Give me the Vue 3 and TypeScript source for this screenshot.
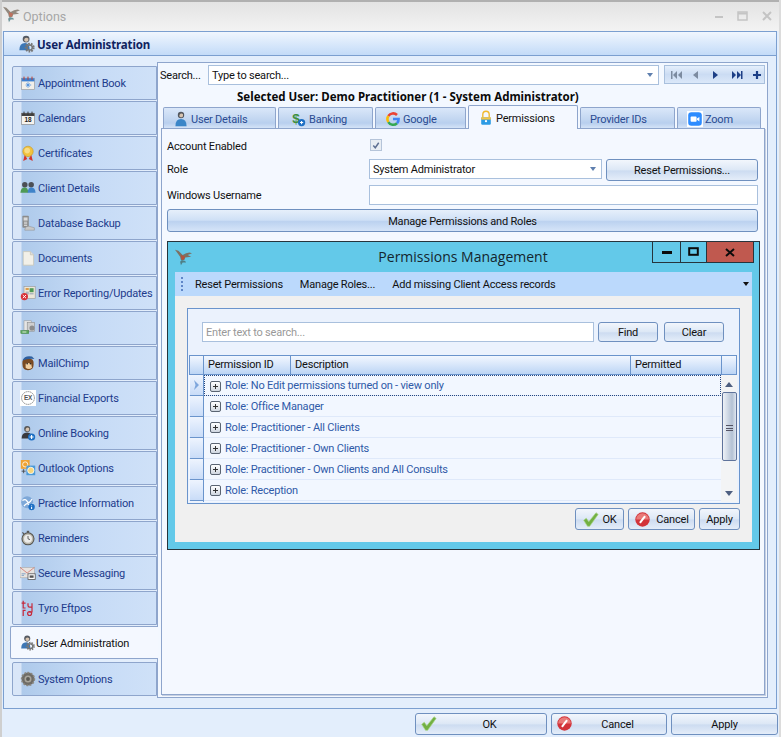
<script setup lang="ts">
const gear = (x: number, y: number, r: number, c = '#777') => `<circle cx="${x}" cy="${y}" r="${r}" fill="none" stroke="${c}" stroke-width="${r * 0.75}" stroke-dasharray="${r * 0.42} ${r * 0.28}"/><circle cx="${x}" cy="${y}" r="${r * 0.72}" fill="none" stroke="${c}" stroke-width="${r * 0.4}"/>`
const icons: Record<string, string> = {
  appt: `<rect x="2" y="4" width="16" height="14" fill="#f1efe9" stroke="#9a9a9a" stroke-width=".8"/><rect x="2" y="4" width="16" height="4" fill="#3d7fd0"/><path d="M5 2v4M10 2v4M15 2v4" stroke="#c0392b" stroke-width="1.2"/><path d="M10 9v7M7 12.5h7M8 10.5l4 4M12 10.5l-4 4" stroke="#4a8fe0" stroke-width="1"/>`,
  cal: `<rect x="2" y="4" width="16" height="14" fill="#f5f3ee" stroke="#888" stroke-width=".8"/><rect x="2" y="4" width="16" height="3.5" fill="#444"/><path d="M5 2v4M10 2v4M15 2v4" stroke="#333" stroke-width="1.2"/><text x="10" y="15.5" font-size="8" font-weight="700" text-anchor="middle" font-family="Liberation Sans" fill="#222">18</text>`,
  cert: `<path d="M6 12 L4 20 L9 17.5Z M14 12 L16 20 L11 17.5Z" fill="#d5342c"/><circle cx="10" cy="8" r="6.5" fill="#f1c23e" stroke="#c99a20" stroke-width=".8"/><circle cx="9" cy="7" r="3.5" fill="#f8dc86"/>`,
  client: `<circle cx="6" cy="6" r="3.4" fill="#4c4f55"/><path d="M0.5 16 Q1 9.5 6 9.5 Q10 9.5 10.5 16Z" fill="#4f9a55"/><circle cx="14" cy="6" r="3.4" fill="#4c4f55"/><path d="M9.5 16 Q10 9.5 14 9.5 Q19 9.5 19.5 16Z" fill="#3f83c9"/>`,
  db: `<rect x="3" y="1" width="8" height="15" rx="1" fill="#8c8c8c"/><rect x="4.5" y="3" width="5" height="4" fill="#dadada"/><path d="M5 9h4M5 11h4M5 13h4" stroke="#efefef"/><path d="M6 18 Q6 14 11 14 L18 16 L18 19 L6 19Z" fill="#c8c8c8" stroke="#8a8a8a" stroke-width=".6"/>`,
  doc: `<path d="M4 2 H13 L17 6 V19 H4Z" fill="#f2f0e8" stroke="#c8c5b8" stroke-width="1"/><path d="M13 2V6H17" fill="#ddd" stroke="#c8c5b8"/>`,
  err: `<rect x="5" y="2" width="14" height="15" fill="#ece7d8" stroke="#9a9a9a" stroke-width=".8"/><rect x="7" y="4" width="4" height="2" fill="#d98a2b"/><rect x="12" y="4" width="5" height="5" fill="#4f9a55"/><path d="M7 9h4M7 11h4M12 11h5" stroke="#7b8ea8"/><circle cx="5.5" cy="14.5" r="4.5" fill="#d8333a"/><path d="M3.5 12.5l4 4M7.5 12.5l-4 4" stroke="#fff" stroke-width="1.2"/>`,
  inv: `<rect x="5" y="1" width="9" height="12" fill="#e6e6e6" stroke="#999" stroke-width=".7"/><rect x="9" y="3" width="9" height="11" fill="#cfcfcf" stroke="#888" stroke-width=".7"/><circle cx="15" cy="10" r="3.2" fill="#8c8c8c"/><rect x="1" y="13" width="10" height="4" fill="#5aa55a" stroke="#3e7a3e" stroke-width=".5"/><path d="M3 15h5" stroke="#fff"/>`,
  chimp: `<path d="M3 11 Q2 4 10 4 Q18 4 17 12 Q17 19 10 19 Q3 19 3 11Z" fill="#7a4a22"/><path d="M7 11 Q10 9 14 11 L15 16 Q11 19 7 16Z" fill="#f0cfa2"/><path d="M3 7 Q6 0 15 2 L18 5 Q10 4 3 7Z" fill="#2e5f9f"/><circle cx="9" cy="11" r="1" fill="#222"/><circle cx="13" cy="11" r="1" fill="#222"/>`,
  ex: `<rect width="20" height="20" fill="#fff"/><circle cx="10" cy="10" r="8" fill="#fff" stroke="#777" stroke-width="1" stroke-dasharray="2 .6"/><text x="10" y="13" font-size="8" font-weight="700" text-anchor="middle" font-family="Liberation Sans" fill="#555">EX</text>`,
  online: `<circle cx="9" cy="5" r="3.8" fill="#555"/><path d="M7 5 Q9 2 11.5 4 L11.5 7 Q9 9 7 7Z" fill="#d8c4b0"/><path d="M2 17 Q2 9.5 9 9.5 Q15 9.5 15 17Z" fill="#3a3a3e"/><circle cx="14.5" cy="15" r="4.5" fill="#1d6fc4"/><path d="M14.5 12.5v5M12 15h5" stroke="#fff" stroke-width="1.4"/>`,
  outlook: `<rect x="1" y="0" width="11" height="11" fill="#f0a232"/><circle cx="6.5" cy="5.5" r="3.2" fill="none" stroke="#fff" stroke-width="1"/><rect x="8" y="7" width="11" height="12" fill="#4a9ad8"/><circle cx="13.5" cy="13" r="4" fill="#f7d67c" stroke="#fff"/><path d="M2 14h5M4.5 11.5v5" stroke="#444"/>`,
  practice: `<circle cx="9" cy="9" r="7.5" fill="#7ea8d8"/><path d="M3 7 Q7 4 9 8 T15 5M5 14 Q8 9 11 12 T16 11" stroke="#fff" stroke-width="1.6" fill="none"/><circle cx="14.5" cy="15" r="4" fill="#1d6fc4"/><path d="M14.5 13v1M14.5 15v2.5" stroke="#fff" stroke-width="1.3"/>`,
  remind: `<circle cx="10" cy="11" r="7.5" fill="#b8b5aa" stroke="#55534c" stroke-width="1.3"/><circle cx="10" cy="11" r="5" fill="#ececea"/><path d="M10 11V7.5M10 11l2.5 1" stroke="#444"/><rect x="8.5" y="1" width="3" height="2.5" fill="#555"/><path d="M3 3l2 2" stroke="#555" stroke-width="1.4"/>`,
  secure: `<rect x="0" y="3" width="18" height="13" fill="#e7e3df" stroke="#a5a5a5" stroke-width=".7"/><path d="M0 3l9 7 9-7" stroke="#d0736c" stroke-width="1" fill="none"/><path d="M2 11h5M2 13h3" stroke="#6d96c2"/><rect x="10" y="11" width="9" height="7" fill="#fff" stroke="#555"/><rect x="12" y="13" width="5" height="3" fill="#555"/>`,
  tyro: `<g fill="none" stroke="#c8283a" stroke-width="1.5"><path d="M4 1v9h3M2 4h5M10 4v3q0 2 2 2h3M15 4v11h-4"/><path d="M4 20v-7h3"/><circle cx="12" cy="17" r="2.5"/></g>`,
  user: `<circle cx="9" cy="4.5" r="3.8" fill="#555a62"/><path d="M7 4.5 Q9 2 11.5 4 L11.5 6.5 Q9 8.5 7 6.5Z" fill="#d8c4b0"/><path d="M1.5 17 Q1.5 9 8 9 Q13 9 13 17Z" fill="#3d77b5"/>${gear(13, 14, 4)}`,
  sys: `<circle cx="10" cy="10" r="8" fill="#6f6c66"/><circle cx="10" cy="10" r="8" fill="none" stroke="#8b8880" stroke-width="2" stroke-dasharray="2.4 1.6"/><circle cx="10" cy="10" r="4.4" fill="#a8a59c"/><circle cx="10" cy="10" r="2.4" fill="#5c5a54"/>`,
  udet: `<circle cx="10" cy="5" r="4" fill="#53575e"/><path d="M8 5 Q10 2 12.5 4 L12.5 7 Q10 9 8 7Z" fill="#d8c4b0"/><path d="M3 19 Q3 10 10 10 Q17 10 17 19Z" fill="#3a86c8"/>`,
  bank: `<text x="7.5" y="15" font-size="17" font-weight="700" text-anchor="middle" font-family="Liberation Sans" fill="#3f8f3c">$</text><circle cx="14.5" cy="14.5" r="4.5" fill="#1d6fc4"/><path d="M14.5 12.5v4M12.5 14.5h4" stroke="#fff" stroke-width="1.3"/>`,
  google: `<g fill="none" stroke-width="3.2"><path d="M4.2 6.2A7 7 0 0 1 15 5" stroke="#ea4335"/><path d="M4.2 6.2A7 7 0 0 0 4.2 13.8" stroke="#fbbc05"/><path d="M4.2 13.8A7 7 0 0 0 15 15.3" stroke="#34a853"/><path d="M15 15.3A7 7 0 0 0 17 10H10" stroke="#4285f4"/></g>`,
  lock: `<path d="M6 9V5.5a4 4 0 0 1 8 0V9" fill="none" stroke="#f0b92c" stroke-width="1.7"/><rect x="4" y="9" width="12" height="9.5" rx="1.5" fill="#2c9be4"/><path d="M4 9h12v3H4z" fill="#f6c644"/><circle cx="10" cy="14" r="1.4" fill="#fff"/>`,
  zoom: `<rect width="20" height="20" fill="#fff"/><rect x="1.5" y="1.5" width="17" height="17" rx="4" fill="#2d8cff"/><rect x="4.5" y="7" width="7.5" height="6.5" rx="1" fill="#fff"/><path d="M12.5 9.5l3-2v5.5l-3-2z" fill="#fff"/>`,
  ok: `<path d="M2 11 L5 8.5 L8 12.5 L16.5 2 L19 4 L9 18 L6.5 18Z" fill="#72b043" stroke="#a9d585" stroke-width=".8"/>`,
  cancel: `<circle cx="10" cy="10" r="8.5" fill="#d2333a"/><path d="M2.5 10a7.5 7.5 0 0 1 15 0" fill="#e97a78"/><path d="M7 14l6-8" stroke="#fff" stroke-width="2.4"/>`,
  bird: `<path d="M0 1 L4 2 L9 7 L13 5 L17 4 L20 5 L15 7 L19 9 L12 10 L11 13 L7 13 L6 9Z" fill="#7d7164"/><path d="M7 7 L12 9 L10 13 L7.5 12Z" fill="#b4533c"/><path d="M8 13 L12 14 L13 16 L9 16 L7 19 L6 15Z" fill="#4f7f86"/>`,
}
const sideItems = [
  ['appt', 'Appointment Book'], ['cal', 'Calendars'], ['cert', 'Certificates'], ['client', 'Client Details'],
  ['db', 'Database Backup'], ['doc', 'Documents'], ['err', 'Error Reporting/Updates'], ['inv', 'Invoices'],
  ['chimp', 'MailChimp'], ['ex', 'Financial Exports'], ['online', 'Online Booking'], ['outlook', 'Outlook Options'],
  ['practice', 'Practice Information'], ['remind', 'Reminders'], ['secure', 'Secure Messaging'], ['tyro', 'Tyro Eftpos'],
  ['user', 'User Administration'], ['sys', 'System Options'],
]
const tabs = [
  { ic: 'udet', t: 'User Details', w: 113 }, { ic: 'bank', t: 'Banking', w: 95 }, { ic: 'google', t: 'Google', w: 91 },
  { ic: 'lock', t: 'Permissions', w: 110, on: true }, { ic: '', t: 'Provider IDs', w: 95 }, { ic: 'zoom', t: 'Zoom', w: 84 },
]
const rows = [
  'Role: No Edit permissions turned on - view only', 'Role: Office Manager', 'Role: Practitioner - All Clients',
  'Role: Practitioner - Own Clients', 'Role: Practitioner - Own Clients and All Consults', 'Role: Reception',
]
</script>

<template>
  <div class="app">
    <div class="winbar">
      <svg class="bird" viewBox="0 0 20 20" v-html="icons.bird"></svg>
      <span class="wintitle">Options</span>
      <span class="winbtns">
        <svg width="62" height="12" viewBox="0 0 62 12"><path d="M2 7h8" stroke="#c4c4c4" stroke-width="2"/><rect x="25" y="2" width="9" height="8" fill="none" stroke="#c4c4c4" stroke-width="1.5"/><path d="M25 3.5h9" stroke="#c4c4c4" stroke-width="2"/><path d="M50 2l8 8M58 2l-8 8" stroke="#c4c4c4" stroke-width="2"/></svg>
      </span>
    </div>

    <div class="frame">
      <div class="header">
        <svg class="hicon" viewBox="0 0 20 20" v-html="icons.user"></svg>
        <span>User Administration</span>
      </div>
      <div class="body">
        <nav class="side">
          <div v-for="s in sideItems" :key="s[1]" class="sitem" :class="{ on: s[1] === 'User Administration' }">
            <svg class="sicon" viewBox="0 0 20 20" v-html="icons[s[0]]"></svg>
            <span>{{ s[1] }}</span>
          </div>
        </nav>

        <main class="panel">
          <div class="searchrow">
            <span class="searchlbl">Search...</span>
            <div class="combo search"><span>Type to search...</span><i class="caret"></i></div>
            <div class="nav">
              <svg width="100" height="18" viewBox="0 0 100 18">
                <g fill="#7c8ba0"><rect x="7" y="5" width="1.5" height="8"/><path d="M13 5v8l-4-4zM18 5v8l-4-4z"/><path d="M34 5v8l-5-4z"/></g>
                <g fill="#1d3f86"><path d="M49 5v8l5-4z"/><path d="M68 5v8l4-4zM73 5v8l4-4z"/><rect x="77" y="5" width="1.5" height="8"/><path d="M89 9h8M93 5v8" stroke="#1d3f86" stroke-width="2.2"/></g>
              </svg>
            </div>
          </div>
          <div class="selected">Selected User: Demo Practitioner (1 - System Administrator)</div>

          <div class="tabs">
            <div v-for="t in tabs" :key="t.t" class="tab" :class="{ on: t.on }" :style="{ width: t.w + 'px' }">
              <svg v-if="t.ic" class="ticon" viewBox="0 0 20 20" v-html="icons[t.ic]"></svg>
              <span>{{ t.t }}</span>
            </div>
          </div>

          <section class="tabbody">
            <div class="form">
              <label class="l1">Account Enabled</label>
              <div class="check"><svg width="11" height="11" viewBox="0 0 11 11"><path d="M2.5 5.5L4.7 8 8.5 2.5" fill="none" stroke="#5d6f92" stroke-width="1.6"/></svg></div>
              <label class="l2">Role</label>
              <div class="rolerow">
                <div class="combo role"><span>System Administrator</span><i class="caret"></i></div>
                <button class="btn reset">Reset Permissions...</button>
              </div>
              <label class="l3">Windows Username</label>
              <div class="input winuser"></div>
            </div>
            <button class="btn manage">Manage Permissions and Roles</button>

            <div class="dialog">
              <div class="dbar">
                <svg class="dbird" viewBox="0 0 20 20" v-html="icons.bird"></svg>
                <span class="dtitle">Permissions Management</span>
                <div class="dctl">
                  <span class="c"><svg width="12" height="8" viewBox="0 0 12 8"><rect x="1" y="3" width="10" height="3" fill="#0c0c0c"/></svg></span>
                  <span class="c"><svg width="12" height="10" viewBox="0 0 12 10"><rect x="1.2" y="1.2" width="8.6" height="6.6" fill="none" stroke="#0c0c0c" stroke-width="2"/></svg></span>
                  <span class="c x"><svg width="10" height="9" viewBox="0 0 10 9"><path d="M1 1l8 7M9 1L1 8" stroke="#0c0c0c" stroke-width="2"/></svg></span>
                </div>
              </div>
              <div class="dinner">
                <div class="dtool">
                  <span class="grip"></span>
                  <span class="ti a">Reset Permissions</span>
                  <span class="ti b">Manage Roles...</span>
                  <span class="ti c2">Add missing Client Access records</span>
                  <i class="tcaret"></i>
                </div>
                <div class="dcontent">
                  <div class="card">
                    <div class="cardsearch">
                      <div class="input dsearch">Enter text to search...</div>
                      <button class="btn find">Find</button>
                      <button class="btn clear">Clear</button>
                    </div>
                    <div class="grid">
                      <div class="ghead">
                        <span class="gh g0"></span>
                        <span class="gh g1">Permission ID</span>
                        <span class="gh g2">Description</span>
                        <span class="gh g3">Permitted</span>
                        <span class="gh g4"></span>
                      </div>
                      <div class="gbody">
                        <div class="grows">
                          <div v-for="(r, i) in rows" :key="r" class="grow">
                            <span class="ind"><svg v-if="i === 0" width="7" height="10" viewBox="0 0 7 10"><path d="M1 0l5 5-5 5 1.5-5z" fill="#7ea6dc"/></svg></span>
                            <span class="cell" :class="{ focus: i === 0 }">
                              <span class="plus"></span><span>{{ r }}</span>
                            </span>
                          </div>
                          <div class="gtail"><span class="ind"></span></div>
                        </div>
                        <div class="scroll">
                          <i class="up"></i>
                          <div class="thumb"><span class="lines"></span></div>
                          <i class="down"></i>
                        </div>
                      </div>
                    </div>
                  </div>
                  <div class="dfoot">
                    <button class="btn dok"><svg class="bicon" viewBox="0 0 20 20" v-html="icons.ok"></svg><span>OK</span></button>
                    <button class="btn dcancel"><svg class="bicon" viewBox="0 0 20 20" v-html="icons.cancel"></svg><span>Cancel</span></button>
                    <button class="btn dapply">Apply</button>
                  </div>
                </div>
              </div>
            </div>
          </section>
        </main>
      </div>
    </div>

    <footer class="foot">
      <button class="btn fok"><svg class="bicon fi" viewBox="0 0 20 20" v-html="icons.ok"></svg>OK</button>
      <button class="btn fcancel"><svg class="bicon fi" viewBox="0 0 20 20" v-html="icons.cancel"></svg>Cancel</button>
      <button class="btn fapply">Apply</button>
    </footer>
  </div>
</template>

<style>
html, body { margin: 0; background: #e3eefc; }
</style>

<style scoped>
* { box-sizing: border-box; }
.app { width: 781px; height: 737px; overflow: hidden; background: #e3eefc; display: flex; flex-direction: column; font: 11px/14px Roboto, "Liberation Sans", Arial, sans-serif; letter-spacing: -0.2px; color: #111; border-left: 2px solid #cfcfcf; border-right: 2px solid #dcdcdc; }
.winbar { height: 31px; margin: 0 -2px; flex: none; display: flex; align-items: center; background: linear-gradient(#e3e3e3, #f3f3f3); border-top: 2px solid #b0b0b0; padding: 0 6px 2px 3px; }
.bird { width: 17px; height: 17px; margin-top: -2px; opacity: .8; }
.wintitle { margin-left: 3px; padding-top: 2px; font-size: 12.5px; color: #a6a6a6; letter-spacing: 0; }
.winbtns { margin-left: auto; display: flex; }
.frame { flex: none; height: 678px; margin-left: 1px; margin-right: 2px; border: 1px solid #7b9fd0; display: flex; flex-direction: column; }
.header { height: 24px; flex: none; display: flex; align-items: center; padding-left: 14px; gap: 1px; background: linear-gradient(#f0f6fe, #c3dbf8); border-bottom: 1px solid #7b9fd0; font: 700 11.5px "Noto Sans", sans-serif; letter-spacing: -0.15px; color: #10235f; }
.header span { padding-top: 1px; }
.hicon { width: 18px; height: 18px; }
.body { flex: 1; display: flex; min-height: 0; }
.side { width: 153px; flex: none; padding: 10px 0 0 8px; display: flex; flex-direction: column; gap: 1px; }
.sitem { height: 34px; flex: none; display: flex; align-items: center; padding-left: 7px; border: 1px solid #8ea5cc; border-radius: 2px 0 0 2px; background: linear-gradient(90deg, #d9e6f8 0 8px, #aecaeb 9px, #c6dbf6 55%, #cfe1f8); color: #1d3b8c; white-space: nowrap; }
.sitem span { padding-top: 2px; }
.sitem .sicon { width: 16px; height: 16px; margin-right: 2px; flex: none; }
.sitem.on { margin: 0 -1px 2px -2px; height: 33px; background: #f4f8ff; color: #111; padding-left: 9px; position: relative; border-right: 0; z-index: 2; }
.sitem.on .sicon { margin-right: 0; }
.panel { width: 611px; flex: none; margin: 6px 0 10px; border: 1px solid #8ea5cc; background: #f3f8ff; padding: 2px 2px 2px 3px; display: flex; flex-direction: column; }
.searchrow { display: flex; align-items: flex-start; height: 20px; flex: none; }
.searchlbl { width: 48px; margin-left: -1px; padding-top: 4px; }
.combo, .input { background: #fff; border: 1px solid #a9c0dd; }
.combo { display: flex; align-items: center; justify-content: space-between; padding: 0 5px 0 3px; }
.combo span { padding-top: 2px; }
.search { width: 451px; height: 20px; }
.caret { width: 0; height: 0; border: 3.5px solid transparent; border-top: 4px solid #5f7fae; border-bottom: 0; }
.nav { width: 101px; height: 19px; margin-left: 5px; border: 1px solid #a9c0dd; background: linear-gradient(#e5effc, #cbdcf3 50%, #dbe8f9); }
.nav svg { display: block; margin: 0 -1px; }
.selected { height: 20px; flex: none; padding: 3px 0 0 76px; font: 700 11.5px/17px "Noto Sans", sans-serif; color: #0a0a0a; white-space: nowrap; letter-spacing: 0; }
.tabs { display: flex; gap: 2px; padding-left: 2px; height: 23px; align-items: flex-end; flex: none; position: relative; z-index: 2; }
.tab { height: 21px; display: flex; align-items: center; padding: 1px 0 0 9px; gap: 2px; border: 1px solid #8ea5cc; border-bottom: 0; border-radius: 2px 2px 0 0; background: linear-gradient(#dae7f9, #c3d7f1 55%, #b8cfee 75%, #d4e3f7); color: #2a4b92; }
.tab span { padding-top: 2px; }
.tab:nth-child(2) { padding-left: 11px; gap: 3px; }
.tab.on { background: #f4f8ff; color: #111; margin-bottom: -1px; height: 24px; padding-top: 0; }
.ticon { width: 16px; height: 16px; }
.tabbody { width: 604px; flex: 1; border: 1px solid #8ea5cc; box-shadow: 1px 1px 0 #c6d0e2; background: #f4f8ff; padding: 7px 6px 0 5px; }
.form { display: grid; grid-template-columns: 202px 1fr; grid-template-rows: 23px 26px 24px; align-items: center; }
.l1 { margin-top: -1px; }
.l2 { margin-top: -4px; }
.l3 { margin-top: -2px; }
.check { width: 12px; height: 12px; margin-left: 1px; margin-top: -5px; border: 1px solid #b5c4d9; background: #e8edf3; display: flex; align-items: center; justify-content: center; }
.rolerow { display: flex; gap: 4px; align-items: flex-start; height: 23px; margin-top: -3px; }
.role { width: 233px; height: 20px; }
.btn { display: block; padding: 2px 0 0; font: inherit; letter-spacing: inherit; color: #111; border: 1px solid #6f90bf; border-radius: 3px; background: linear-gradient(#f2f6fc, #dde8f6 48%, #cddcf1 55%, #e4edf9); text-align: center; }
.reset { width: 152px; height: 22px; }
.winuser { height: 20px; width: 389px; margin-top: -4px; }
.manage { width: 591px; height: 23px; margin-top: 0; background: linear-gradient(#e6effb, #cfe0f6 48%, #bcd2f0 55%, #d5e4f8); }
.dialog { width: 593px; height: 309px; margin-top: 9px; border: 1px solid #26343c; background: #63c9e9; padding: 0 7px 7px; display: flex; flex-direction: column; }
.dbar { height: 30px; flex: none; display: flex; position: relative; justify-content: center; align-items: flex-start; }
.dbird { width: 17px; height: 17px; position: absolute; left: 0; top: 7px; }
.dtitle { font: 14px/30px "Open Sans", sans-serif; letter-spacing: 0; color: #14262e; margin-left: -1px; }
.dctl { position: absolute; right: -2px; top: 0; display: flex; height: 21px; border: 1px solid #26343c; border-top: 0; }
.c { width: 28px; display: flex; align-items: center; justify-content: center; border-right: 1px solid #26343c; }
.c:nth-child(2) { width: 26px; }
.c.x { width: 46px; border-right: 0; background: #c0594f; }
.dinner { flex: 1; display: flex; flex-direction: column; background: #f0f0f0; }
.dtool { height: 24px; flex: none; background: #bbd9fc; display: flex; align-items: center; position: relative; }
.grip { width: 2px; height: 14px; margin-left: 6px; background: repeating-linear-gradient(#5f86c8 0 2px, transparent 2px 4px); }
.ti { white-space: nowrap; padding-top: 2px; }
.a { margin-left: 12px; } .b { margin-left: 17px; } .c2 { margin-left: 17px; }
.tcaret { position: absolute; right: 3px; top: 10px; width: 0; height: 0; border: 3px solid transparent; border-top: 4px solid #111; border-bottom: 0; }
.dcontent { flex: 1; padding: 12px 12px 0; }
.card { height: 196px; border: 1px solid #6a94cc; background: #ebf2fd; padding: 13px 1px 0; }
.cardsearch { display: flex; height: 33px; padding-left: 13px; align-items: flex-start; }
.dsearch { width: 392px; height: 20px; color: #999; padding: 3px 3px 1px; }
.find { width: 60px; height: 20px; margin-left: 4px; }
.clear { width: 60px; height: 20px; margin-left: 6px; }
.grid { width: 548px; }
.ghead { display: flex; height: 20px; border: 1px solid #6a94cc; background: linear-gradient(#f2f7ff, #bcd5f5); }
.gh { display: flex; align-items: center; padding: 0 0 0 4px; border-right: 1px solid #6a94cc; height: 100%; }
.g0 { width: 14px; } .g1 { width: 87px; } .g2 { width: 340px; } .g3 { width: 91px; } .g4 { flex: 1; border-right: 0; }
.gbody { display: flex; height: 127px; background: #f2f7ff; overflow: hidden; }
.grows { width: 532px; flex: none; }
.grow { display: flex; height: 21px; border-bottom: 1px solid #dfe9fa; color: #2f5aa8; }
.ind { width: 14px; height: 21px; flex: none; margin-left: 1px; border-right: 1px solid #6a94cc; border-bottom: 1px solid #6a94cc; background: linear-gradient(#eef4fe, #c9dcf8); display: flex; align-items: center; justify-content: center; }
.cell { flex: 1; display: flex; align-items: center; padding: 1px 0 0 6px; gap: 4px; }
.cell.focus { border: 1px dotted #25467f; padding: 1px 0 0 5px; height: 21px; }
.plus { width: 11px; height: 11px; flex: none; border: 1px solid #5a6472; border-radius: 2px; background: linear-gradient(#fff, #cfd6e0); position: relative; }
.plus::before, .plus::after { content: ""; position: absolute; background: #333; }
.plus::before { left: 2px; right: 2px; top: 4px; height: 1px; }
.plus::after { top: 2px; bottom: 2px; left: 4px; width: 1px; }
.gtail { height: 5px; }
.scroll { width: 16px; flex: none; background: #f3f4f5; display: flex; flex-direction: column; align-items: center; position: relative; padding: 7px 0 0 0; }
.up, .down { width: 0; height: 0; border: 4px solid transparent; flex: none; }
.up { border-bottom: 5px solid #4e5f80; border-top: 0; }
.down { border-top: 5px solid #4e5f80; border-bottom: 0; margin-top: 30px; }
.thumb { width: 15px; height: 69px; margin-top: 5px; border: 1px solid #5f739b; border-radius: 2px; background: linear-gradient(90deg, #eef2f7, #b3c1d4 70%, #dfe6ef); display: flex; align-items: center; justify-content: center; flex: none; }
.lines { width: 7px; height: 6px; background: repeating-linear-gradient(#556 0 1px, transparent 1px 2.5px); margin-top: 3px; }
.dfoot { display: flex; justify-content: flex-end; height: 23px; margin-top: 4px; gap: 4px; }
.dfoot .btn { height: 22px; display: flex; align-items: center; justify-content: center; }
.dok { width: 49px; gap: 3px; }
.dcancel { width: 67px; gap: 5px; }
.dapply { width: 41px; }
.bicon { width: 17px; height: 17px; flex: none; margin-top: -2px; }
.foot { flex: 1; display: flex; justify-content: flex-end; align-items: flex-start; padding: 4px 1px 0 0; gap: 4px; }
.foot .btn { height: 22px; position: relative; }
.fok { width: 132px; padding-left: 17px; } .fcancel { width: 116px; padding-left: 17px; } .fapply { width: 107px; }
.fi { position: absolute; left: 4px; top: 1px; margin-top: 0; }
</style>
